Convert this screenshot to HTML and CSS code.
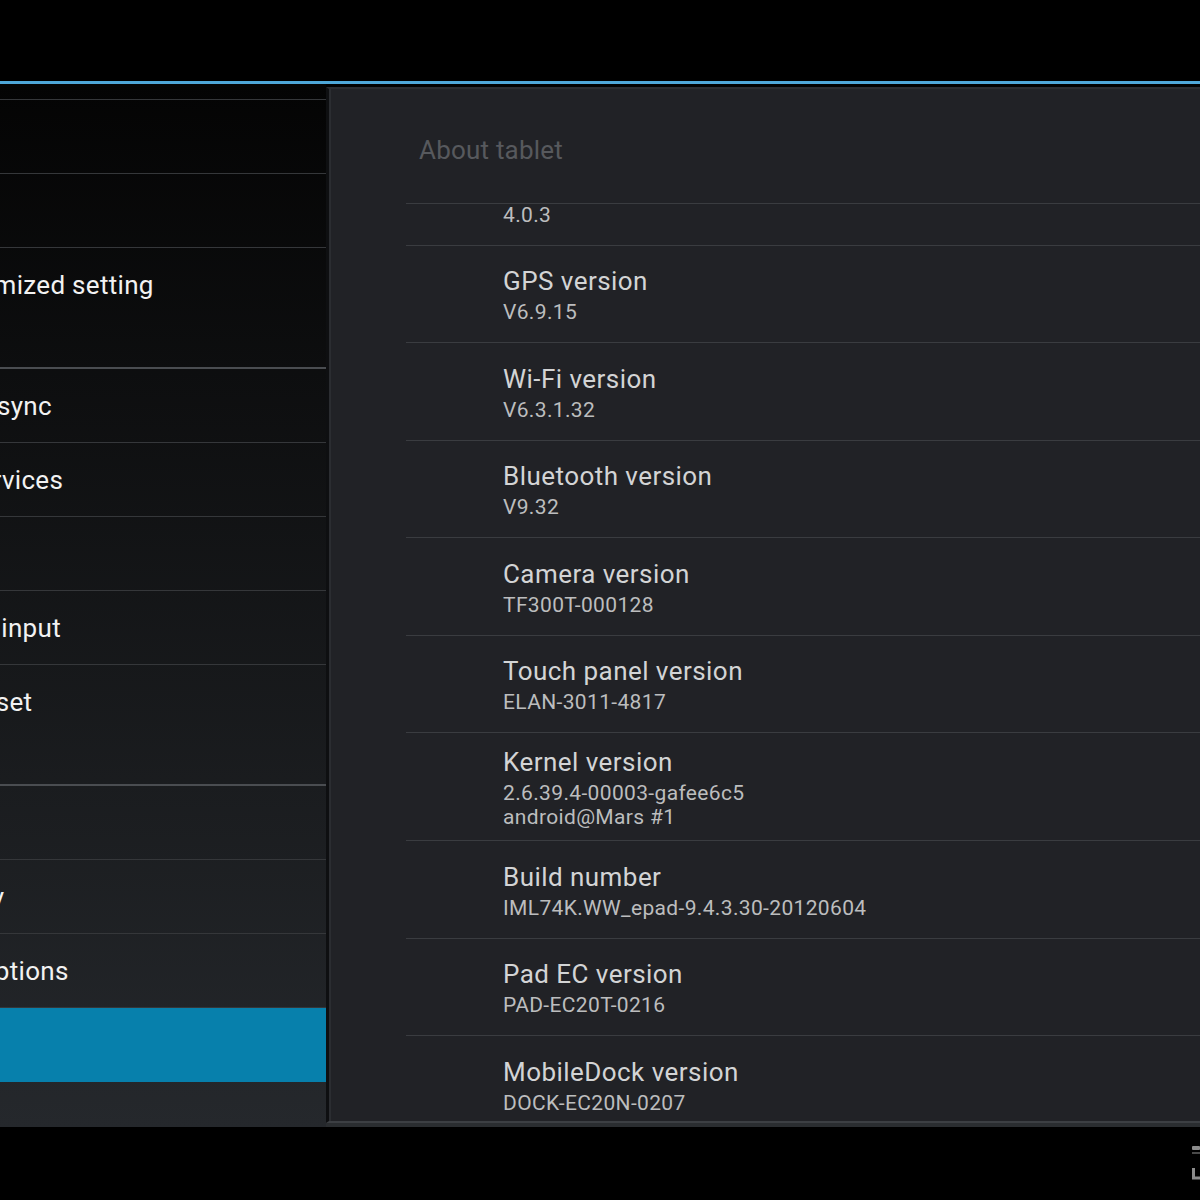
FILE: index.html
```html
<!DOCTYPE html>
<html lang="en">
<head>
<meta charset="utf-8">
<title>Settings - About tablet</title>
<link rel="stylesheet" href="styles.css">
</head>
<body>
<div class="screen">
  <div class="statusbar"></div>
  <div class="accent"></div>
  <div class="content">
    <nav class="left">
      <ul class="nav-list">
        <li class="nav-item">Storage</li>
        <li class="nav-item">Battery</li>
        <li class="nav-item">Apps</li>
        <li class="nav-item nav-item--last">ASUS customized setting</li>
        <li class="nav-header">PERSONAL</li>
        <li class="nav-item">Accounts &amp; sync</li>
        <li class="nav-item">Location services</li>
        <li class="nav-item">Security</li>
        <li class="nav-item">Language &amp; input</li>
        <li class="nav-item nav-item--last">Backup &amp; reset</li>
        <li class="nav-header">SYSTEM</li>
        <li class="nav-item">Date &amp; time</li>
        <li class="nav-item">Accessibility</li>
        <li class="nav-item">Developer options</li>
        <li class="nav-item nav-item--active">About tablet</li>
      </ul>
    </nav>
    <main class="main">
      <section class="card">
        <h1 class="card-title">About tablet</h1>
        <div class="viewport">
          <ul class="about-list">
            <li class="about-item"><span class="about-title">Android version</span><span class="about-sub">4.0.3</span></li>
            <li class="about-item"><span class="about-title">GPS version</span><span class="about-sub">V6.9.15</span></li>
            <li class="about-item"><span class="about-title">Wi-Fi version</span><span class="about-sub">V6.3.1.32</span></li>
            <li class="about-item"><span class="about-title">Bluetooth version</span><span class="about-sub">V9.32</span></li>
            <li class="about-item"><span class="about-title">Camera version</span><span class="about-sub">TF300T-000128</span></li>
            <li class="about-item"><span class="about-title">Touch panel version</span><span class="about-sub">ELAN-3011-4817</span></li>
            <li class="about-item about-item--tall"><span class="about-title">Kernel version</span><span class="about-sub">2.6.39.4-00003-gafee6c5</span><span class="about-sub about-sub--tight">android@Mars #1</span></li>
            <li class="about-item"><span class="about-title">Build number</span><span class="about-sub">IML74K.WW_epad-9.4.3.30-20120604</span></li>
            <li class="about-item"><span class="about-title">Pad EC version</span><span class="about-sub">PAD-EC20T-0216</span></li>
            <li class="about-item"><span class="about-title">MobileDock version</span><span class="about-sub">DOCK-EC20N-0207</span></li>
          </ul>
        </div>
      </section>
    </main>
  </div>
  <div class="navbar">
    <svg class="nav-icon" width="8" height="40" viewBox="0 0 8 40" aria-hidden="true">
      <rect x="0" y="2" width="8" height="4" rx="1" fill="#8c8c8c"/>
      <rect x="0" y="8" width="8" height="2" fill="#4a4a4a"/>
      <path d="M1.5 24 V34 H8" fill="none" stroke="#8c8c8c" stroke-width="3"/>
    </svg>
  </div>
</div>
</body>
</html>
```

FILE: styles.css
```css
* {
  box-sizing: border-box;
}

html, body {
  margin: 0;
  padding: 0;
  background: #000;
}

body {
  width: 1200px;
  height: 1200px;
  overflow: hidden;
  font-family: Roboto, "Noto Sans", "Liberation Sans", sans-serif;
}

.screen {
  width: 1200px;
  height: 1200px;
  overflow: hidden;
  display: flex;
  flex-direction: column;
}

.statusbar {
  height: 81px;
  background: #000;
  flex: none;
}

.accent {
  height: 3px;
  background: #4ea7d8;
  flex: none;
}

.content {
  height: 1043px;
  display: flex;
  flex: none;
}

/* ---------- left navigation ---------- */
.left {
  width: 326px;
  flex: none;
  overflow: hidden;
  background: linear-gradient(to bottom, #040404 0%, #25282c 100%);
}

.nav-list {
  list-style: none;
  margin: -58px 0 0 -145px;
  padding: 0;
}

.nav-item {
  height: 74px;
  border-bottom: 1px solid #35373a;
  display: flex;
  align-items: center;
  color: #f2f2f2;
  font-size: 26px;
  letter-spacing: 0.3px;
  white-space: nowrap;
}

.nav-item--last {
  border-bottom: none;
}

.nav-item--active {
  background: #0780ac;
  border-bottom: none;
}

.nav-header {
  height: 47px;
  border-bottom: 2px solid #4a4d51;
  display: flex;
  align-items: flex-end;
  padding-bottom: 6px;
  font-size: 14px;
  font-weight: bold;
  color: #5c5f63;
  white-space: nowrap;
}

/* ---------- main card ---------- */
.main {
  flex: 1;
  min-width: 0;
  padding: 3px 0 4px;
  background: linear-gradient(to top, #2a2d30 4px, #000 4px);
}

.card {
  height: 100%;
  margin-right: -20px;
  display: flex;
  flex-direction: column;
  background: #212226;
  border-left: 3px solid #0e0f11;
  border-top: 2px solid #2a2c30;
  border-bottom: 2px solid #3c3f43;
  box-shadow: inset 2px 0 0 #2b2d31;
  overflow: hidden;
}

.card-title {
  margin: 0;
  height: 114px;
  flex: none;
  padding: 43px 0 0 90px;
  font-size: 26px;
  line-height: 36px;
  font-weight: normal;
  letter-spacing: 0.2px;
  color: #57595d;
}

.viewport {
  flex: 1;
  min-height: 0;
  margin-left: 77px;
  border-top: 1px solid #3a3c40;
  overflow: hidden;
}

.about-list {
  list-style: none;
  margin: -56px 0 0;
  padding: 0;
}

.about-item {
  min-height: 97.5px;
  padding: 12px 0 11px 97px;
  border-bottom: 1px solid #3a3c40;
  display: flex;
  flex-direction: column;
  justify-content: center;
}

.about-title {
  font-size: 26px;
  line-height: 34px;
  letter-spacing: 0.45px;
  color: #d3d4d5;
  white-space: nowrap;
}

.about-sub {
  font-size: 21px;
  line-height: 24px;
  margin-top: 2px;
  letter-spacing: 0.35px;
  color: #bcbdbe;
  white-space: nowrap;
}

.about-sub--tight {
  margin-top: 0;
}

/* ---------- bottom bar ---------- */
.navbar {
  flex: 1;
  display: flex;
  justify-content: flex-end;
  align-items: flex-start;
  background: #000;
}

.nav-icon {
  margin-top: 17px;
}
```
